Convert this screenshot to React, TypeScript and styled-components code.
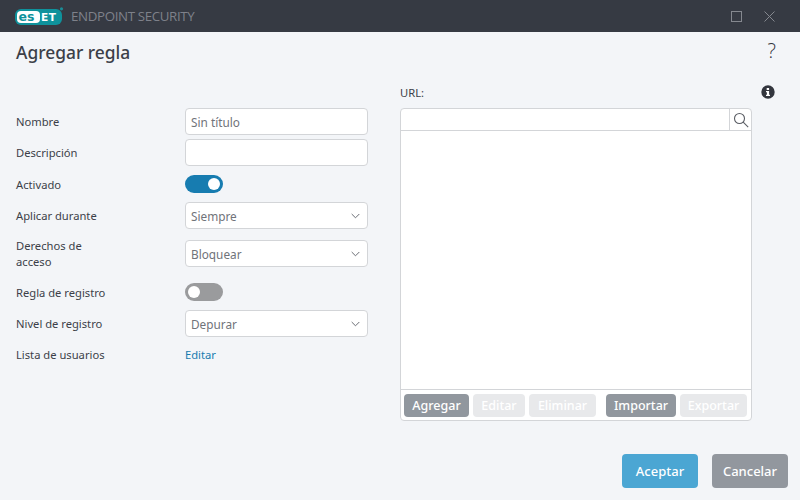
import styled, { createGlobalStyle } from 'styled-components';

const GlobalStyle = createGlobalStyle`
  html, body {
    margin: 0;
    padding: 0;
    background: #f3f5f8;
  }
  * {
    box-sizing: border-box;
  }
`;

const Page = styled.div`
  width: 800px;
  height: 500px;
  display: flex;
  flex-direction: column;
  overflow: hidden;
  background: #f3f5f8;
  color: #3c3f48;
  font-family: 'Noto Sans', 'Open Sans', sans-serif;
  font-size: 11.2px;
`;

const TitleBar = styled.div`
  height: 32px;
  flex: none;
  display: flex;
  align-items: center;
  justify-content: space-between;
  padding: 0 25px 0 15px;
  background: #363a43;
`;

const Brand = styled.div`
  display: flex;
  align-items: center;
  gap: 7px;
`;

const ProductName = styled.span`
  font-family: 'Open Sans', 'Noto Sans', sans-serif;
  font-size: 13.3px;
  letter-spacing: -0.35px;
  color: #7e818a;
`;

const WindowControls = styled.div`
  display: flex;
  align-items: center;
  gap: 22px;
`;

const Header = styled.div`
  height: 48px;
  flex: none;
  display: flex;
  align-items: flex-start;
  justify-content: space-between;
  padding: 7px 24px 0 16px;
`;

const Title = styled.h1`
  margin: 1px 0 0;
  font-size: 17.4px;
  line-height: 24px;
  font-weight: 500;
  color: #3c3f48;
`;

const HelpMark = styled.span`
  font-family: 'Open Sans', sans-serif;
  font-size: 20px;
  line-height: 24px;
  font-weight: 300;
  color: #33363e;
`;

const Main = styled.div`
  flex: 1;
  display: flex;
  gap: 32px;
  padding-left: 16px;
`;

const Form = styled.div`
  width: 352px;
  padding-top: 26px;
  display: flex;
  flex-direction: column;
`;

const Row = styled.div<{ $height?: number }>`
  height: ${p => p.$height ?? 31}px;
  display: grid;
  grid-template-columns: 169px 183px;
  align-items: center;
`;

const Label = styled.label`
  width: 96px;
  padding-top: 1px;
  line-height: 16px;
  white-space: pre-line;
`;

const Field = styled.div`
  height: 27px;
  display: flex;
  align-items: center;
  justify-content: space-between;
  padding: 0 7px 0 5px;
  background: #fff;
  border: 1px solid #d3d5d8;
  border-radius: 4px;
  color: #70737a;
  font-size: 11.8px;
`;

const Toggle = styled.div<{ $on?: boolean }>`
  width: 38px;
  height: 18px;
  display: flex;
  align-items: center;
  justify-content: ${p => (p.$on ? 'flex-end' : 'flex-start')};
  padding: 0 3px;
  border-radius: 9px;
  background: ${p => (p.$on ? '#177cb0' : '#9a9b9d')};
`;

const Knob = styled.span`
  width: 12px;
  height: 12px;
  border-radius: 50%;
  background: #fff;
`;

const TextLink = styled.a`
  color: #177cb0;
`;

const UrlPanel = styled.div`
  width: 375px;
  display: flex;
  flex-direction: column;
`;

const UrlHeader = styled.div`
  height: 28px;
  padding-bottom: 4px;
  display: flex;
  align-items: center;
  justify-content: space-between;
`;

const ListBox = styled.div`
  width: 352px;
  height: 313px;
  display: flex;
  flex-direction: column;
  background: #fff;
  border: 1px solid #d3d5d8;
  border-radius: 4px;
`;

const SearchRow = styled.div`
  height: 22px;
  flex: none;
  display: flex;
  justify-content: flex-end;
  border-bottom: 1px solid #d3d5d8;
`;

const SearchButton = styled.div`
  width: 22px;
  display: flex;
  align-items: center;
  justify-content: center;
  border-left: 1px solid #d3d5d8;
`;

const ListBody = styled.div`
  flex: 1;
`;

const Toolbar = styled.div`
  height: 31px;
  flex: none;
  display: flex;
  align-items: center;
  gap: 4px;
  padding: 0 3px;
  border-top: 1px solid #d3d5d8;
`;

const ToolButton = styled.button<{ $width: number; $off?: boolean; $spaced?: boolean }>`
  width: ${p => p.$width}px;
  height: 23px;
  margin-left: ${p => (p.$spaced ? 6 : 0)}px;
  padding: 1px 0 0;
  border: 0;
  border-radius: 4px;
  font-family: inherit;
  font-size: 12.5px;
  font-weight: 500;
  color: #fff;
  background: ${p => (p.$off ? '#e8e9eb' : '#91979e')};
`;

const Footer = styled.div`
  height: 46px;
  flex: none;
  display: flex;
  justify-content: flex-end;
  gap: 14px;
  padding-right: 12px;
`;

const DialogButton = styled.button<{ $primary?: boolean }>`
  width: 76px;
  height: 34px;
  padding: 0;
  border: 0;
  border-radius: 4px;
  font-family: inherit;
  font-size: 13px;
  font-weight: 500;
  color: #fff;
  background: ${p => (p.$primary ? '#4ba6d3' : '#92979e')};
`;

function EsetLogo() {
  return (
    <svg width="49" height="18" viewBox="0 0 49 18" aria-label="ESET">
      <circle cx="46.5" cy="1.8" r="1.6" fill="#1b8c96" />
      <rect x="0" y="2" width="47" height="16" rx="6" fill="#0f929c" />
      <rect x="2" y="4" width="23" height="12" rx="4" fill="#fff" />
      <text x="3.500" y="14" fontFamily="'DejaVu Sans', sans-serif" fontSize="12.5" fontWeight="700" fill="#0f929c">
        es
      </text>
      <text x="26" y="14" fontFamily="'DejaVu Sans', sans-serif" fontSize="10.5" fontWeight="700" fill="#fff" letterSpacing="0.6">
        ET
      </text>
    </svg>
  );
}

function Chevron() {
  return (
    <svg width="9" height="6" viewBox="0 0 9 6" fill="none" stroke="#6a6d74" strokeWidth="1">
      <path d="M.7 1l3.800 3.800L8.300 1" />
    </svg>
  );
}

function InfoIcon() {
  return (
    <svg width="14" height="14" viewBox="0 0 14 14">
      <circle cx="7" cy="7" r="6.7" fill="#33363e" />
      <path d="M5.7 3h2.4v1.9H5.7zM5 6h3.1v3.7H9v1.3H5V9.7h.9V7.3H5z" fill="#fff" />
    </svg>
  );
}

function SearchIcon() {
  return (
    <svg width="16" height="16" viewBox="0 0 16 16" fill="none" stroke="#5a5d64" strokeWidth="1.1">
      <circle cx="6.500" cy="6.500" r="5" />
      <path d="M10.200 10.200l5 5" />
    </svg>
  );
}

function SelectField({ value }: { value: string }) {
  return (
    <Field>
      {value}
      <Chevron />
    </Field>
  );
}

export default function App() {
  return (
    <Page>
      <GlobalStyle />
      <TitleBar>
        <Brand>
          <EsetLogo />
          <ProductName>ENDPOINT SECURITY</ProductName>
        </Brand>
        <WindowControls>
          <svg width="11" height="11" viewBox="0 0 11 11" fill="none" stroke="#85888f">
            <rect x="0.5" y="0.5" width="10" height="10" />
          </svg>
          <svg width="11" height="11" viewBox="0 0 11 11" fill="none" stroke="#85888f">
            <path d="M.5.5l10 10M10.500.5l-10 10" />
          </svg>
        </WindowControls>
      </TitleBar>

      <Header>
        <Title>Agregar regla</Title>
        <HelpMark>?</HelpMark>
      </Header>

      <Main>
        <Form>
          <Row>
            <Label>Nombre</Label>
            <Field>Sin título</Field>
          </Row>
          <Row>
            <Label>Descripción</Label>
            <Field />
          </Row>
          <Row $height={32}>
            <Label>Activado</Label>
            <Toggle $on>
              <Knob />
            </Toggle>
          </Row>
          <Row>
            <Label>Aplicar durante</Label>
            <SelectField value="Siempre" />
          </Row>
          <Row $height={45}>
            <Label>{'Derechos de\nacceso'}</Label>
            <SelectField value="Bloquear" />
          </Row>
          <Row $height={32}>
            <Label>Regla de registro</Label>
            <Toggle>
              <Knob />
            </Toggle>
          </Row>
          <Row>
            <Label>Nivel de registro</Label>
            <SelectField value="Depurar" />
          </Row>
          <Row>
            <Label>Lista de usuarios</Label>
            <TextLink>Editar</TextLink>
          </Row>
        </Form>

        <UrlPanel>
          <UrlHeader>
            <span>URL:</span>
            <InfoIcon />
          </UrlHeader>
          <ListBox>
            <SearchRow>
              <SearchButton>
                <SearchIcon />
              </SearchButton>
            </SearchRow>
            <ListBody />
            <Toolbar>
              <ToolButton $width={65}>Agregar</ToolButton>
              <ToolButton $width={52} $off>
                Editar
              </ToolButton>
              <ToolButton $width={67} $off>
                Eliminar
              </ToolButton>
              <ToolButton $width={70} $spaced>
                Importar
              </ToolButton>
              <ToolButton $width={67} $off>
                Exportar
              </ToolButton>
            </Toolbar>
          </ListBox>
        </UrlPanel>
      </Main>

      <Footer>
        <DialogButton $primary>Aceptar</DialogButton>
        <DialogButton>Cancelar</DialogButton>
      </Footer>
    </Page>
  );
}
